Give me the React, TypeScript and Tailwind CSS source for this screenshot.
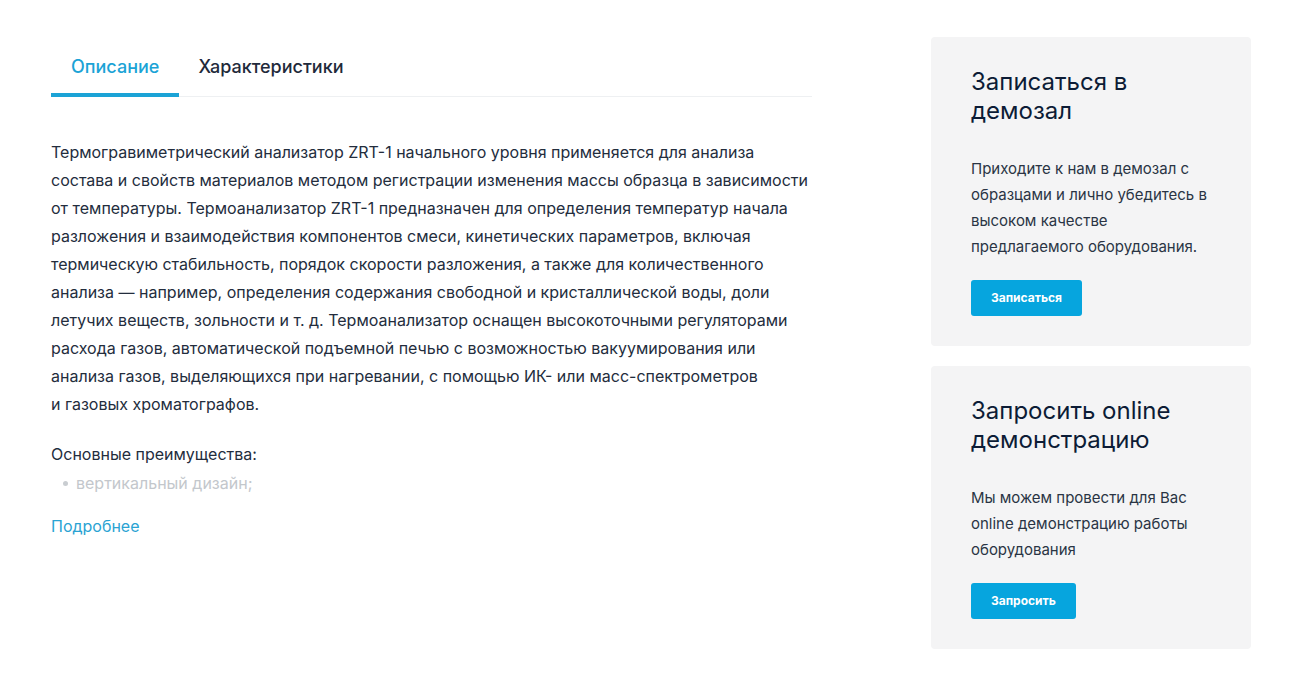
import React from "react";

const text = `Термогравиметрический анализатор ZRT-1 начального уровня применяется для анализа состава и свойств материалов методом регистрации изменения массы образца в зависимости от температуры. Термоанализатор ZRT-1 предназначен для определения температур начала разложения и взаимодействия компонентов смеси, кинетических параметров, включая термическую стабильность, порядок скорости разложения, а также для количественного анализа — например, определения содержания свободной и кристаллической воды, доли летучих веществ, зольности и т. д. Термоанализатор оснащен высокоточными регуляторами расхода газов, автоматической подъемной печью с возможностью вакуумирования или анализа газов, выделяющихся при нагревании, с помощью ИК- или масс-спектрометров и\u00a0газовых хроматографов.`;

const cards = [
  {
    title: "Записаться в демозал",
    text: "Приходите к нам в демозал с образцами и лично убедитесь в высоком качестве предлагаемого оборудования.",
    button: "Записаться",
  },
  {
    title: "Запросить online демонстрацию",
    text: "Мы можем провести для Вас online демонстрацию работы оборудования",
    button: "Запросить",
  },
];

export default function App() {
  return (
    <div
      className="min-h-[674px] bg-white text-[#1f2a3b]"
      style={{ fontFamily: "Inter, 'Noto Sans', sans-serif" }}
    >
      <div className="flex pl-[51px] pt-[37px]">
        <div className="w-[761px]">
          <div className="flex border-b border-[#eef0f2] pt-[16px]">
            <button className="px-5 pb-[12px] text-[18px] leading-[28px] font-medium text-[#1ba3d6] border-b-[4px] border-[#1ba3d6] -mb-px">
              Описание
            </button>
            <button className="pl-[19px] pr-5 pb-[12px] text-[18px] leading-[28px] font-medium text-[#1f2a3b] border-b-[4px] border-transparent -mb-px">
              Характеристики
            </button>
          </div>

          <p className="mt-[41px] text-[16px] leading-[28px] text-[#232d3d]">{text}</p>

          <p className="mt-[22px] text-[16px] leading-[28px] text-[#232d3d]">Основные преимущества:</p>
          <ul className="mt-[1px] pl-[12px] text-[16px] leading-[28px]">
            <li className="flex items-center gap-[8px] text-[#c3c7cc]">
              <span className="inline-block w-[5px] h-[5px] rounded-full bg-[#c9cdd1]" />
              вертикальный дизайн;
            </li>
          </ul>

          <a className="block mt-[15px] text-[16px] leading-[28px] text-[#2aa3d3]" href="#">
            Подробнее
          </a>
        </div>

        <div className="ml-[119px] w-[320px] flex flex-col gap-5">
          {cards.map((card) => (
            <div key={card.button} className="rounded bg-[#f4f4f5] px-10 pt-[30px] pb-[30px]">
              <h2 className="text-[24px] leading-[29px] font-normal text-[#0c1c36]">{card.title}</h2>
              <p className="mt-[31px] text-[15px] leading-[26px] text-[#2a3444]">{card.text}</p>
              <button className="mt-[20px] h-9 rounded-[3px] bg-[#06a5de] px-5 text-[12px] font-bold text-white">
                {card.button}
              </button>
            </div>
          ))}
        </div>
      </div>
    </div>
  );
}
